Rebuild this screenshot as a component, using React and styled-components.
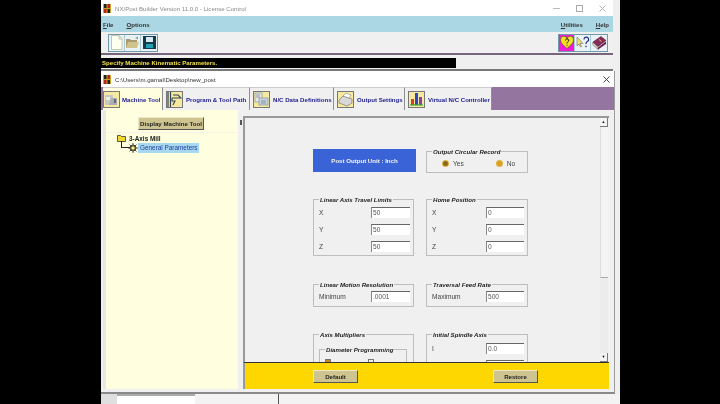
import React from 'react';
import styled, { createGlobalStyle } from 'styled-components';

const Global = createGlobalStyle`
  html, body { margin: 0; padding: 0; background: #000; }
  * { box-sizing: border-box; }
  #root { width: 720px; height: 404px; overflow: hidden; }
`;
const Page = styled.div`
  width: 720px; height: 404px; background: #000; padding-left: 101px; overflow: hidden;
  font-family: "Liberation Sans", Arial, sans-serif; font-size: 6.1px; color: #222;
  filter: blur(0.3px);
`;
const Desktop = styled.div`
  width: 519px; height: 404px; background: #efefef; display: flex; flex-direction: column;
`;
const OuterWindow = styled.section`
  width: 512px; height: 71px; flex: none; display: flex; flex-direction: column; background: #f0f0f0;
`;
const TitleBar = styled.header`
  height: 16px; flex: none; background: #fff; display: flex; align-items: center;
  padding: ${p => p.$inner ? '0 4px 0 2px' : '0 7px 0 2px'}; gap: 4px;
`;
const TitleText = styled.span`
  flex: 1; font-size: 6.1px; color: ${p => p.$inner ? '#333' : '#8a8a8a'};
`;
const WinControls = styled.div`
  display: flex; align-items: center; gap: 16px; color: #9a9a9a;
`;
const MenuBar = styled.nav`
  height: 16px; flex: none; background: #abd7e4; display: flex; align-items: center; padding: 0 4px 0 2px;
`;
const MenuItem = styled.span`
  font-weight: bold; font-size: 6.1px; color: #333; margin-right: ${p => p.$gap || 0}px;
  &::first-letter { text-decoration: underline; }
`;
const MenuSpacer = styled.div` flex: 1; `;
const ToolBar = styled.div`
  height: 21px; flex: none; display: flex; align-items: center; justify-content: space-between;
  padding: 0 5px 0 7px; background: #f0f0f0;
`;
const ToolGroup = styled.div`
  display: flex; height: 18px; border: 1px solid #6f98a8; background: #d4e8ee;
`;
const ToolButton = styled.button`
  width: 16px; height: 16px; padding: 0; border: 0; border-right: 1px solid #a9ccd8;
  background: ${p => p.$bg || '#eaf2f5'}; display: flex; align-items: center; justify-content: center;
  &:last-child { border-right: 0; }
`;
const StatusStrip = styled.div`
  height: 18px; flex: none; border-top: 2px solid #75667e; border-bottom: 2px solid #777; background: #f0f0f0;
  padding-top: 3px;
`;
const StatusBlack = styled.div`
  width: 355px; height: 10px; background: #000; color: #f2e24a; font-weight: bold; font-size: 6.1px;
  line-height: 10px; padding-left: 1px;
`;
const InnerWindow = styled.section`
  width: 514px; height: 323px; flex: none; display: flex; flex-direction: column; background: #f0f0f0;
  border-bottom: 2px solid #8a8a8a; border-right: 1px solid #9a9a9a;
`;
const TabBar = styled.div`
  height: 23px; flex: none; display: flex; padding-left: 2px; background: #9475a0;
`;
const Tab = styled.div`
  width: ${p => p.$w}px; flex: none; display: flex; align-items: center;
  gap: ${p => p.$active ? 2 : 3}px; padding: 1px 0 0 ${p => p.$active ? 0 : 3}px;
  background: ${p => p.$active ? '#ffffe0' : '#f0f0f0'};
  border-right: 1px solid #8f8f8f; border-top: 1px solid #ccc;
  font-weight: bold; font-size: 6.1px; color: #1c1c8e; white-space: nowrap;
`;
const TabIconBox = styled.span`
  width: 17px; height: 17px; flex: none; background: #f6e9a0; border: 1px solid #777;
  display: flex; align-items: center; justify-content: center;
`;
const Body = styled.div`
  flex: 1; min-height: 0; display: flex; background: #f0f0f0; padding: 0 0 3px 2px;
`;
const LeftPane = styled.aside`
  width: 135px; flex: none; background: #ffffe0; border-left: 3px solid #e8e8e0; display: flex; flex-direction: column;
  align-items: stretch; padding-top: 7px;
`;
const DisplayButton = styled.button`
  align-self: center; width: 66px; height: 13px; padding: 0; margin-left: -2px; background: #cdc48f; border: 0;
  border-right: 1px solid #555; border-bottom: 1px solid #555; border-top: 1px solid #eee8c8; border-left: 1px solid #eee8c8;
  font: bold 6.1px "Liberation Sans", Arial, sans-serif; color: #222; white-space: nowrap;
`;
const Tree = styled.div`
  margin-top: 2px; flex: 1; border-top: 1px solid #f4f4ea; padding: 0 0 0 11px; position: relative;
`;
const TreeRow = styled.div`
  display: flex; align-items: center; gap: ${p => p.$gap || 0}px; height: 10px; margin-left: ${p => p.$indent || 0}px;
  font-size: 6.4px; font-weight: ${p => p.$bold ? 'bold' : 'normal'};
`;
const TreeSelected = styled.span`
  background: #a8d8f0; color: #1c3f9c; padding: 0 1px 0 2px; line-height: 10px;
`;
const TreeLink = styled.span`
  position: absolute; left: 15px; top: 8px; width: 9px; height: 7px;
  border-left: 1px solid #222; border-bottom: 1px solid #222;
`;
const Splitter = styled.div`
  width: 5px; flex: none; padding: 10px 0 0 2px; background: #f0f0f0;
`;
const SplitGrip = styled.div` width: 2px; height: 5px; background: #555; `;
const RightCol = styled.div`
  width: 366px; flex: none; display: flex; flex-direction: column; padding-top: 6px;
`;
const Panel = styled.div`
  flex: 1; min-height: 0; display: flex; border-top: 2px solid #999; border-left: 2px solid #999; background: #f0f0f0; overflow: hidden;
`;
const ScrollArea = styled.div`
  flex: 1; min-width: 0; padding: 33px 0 0 68px; overflow: hidden;
`;
const Row = styled.div`
  display: grid; grid-template-columns: 101px 102px; column-gap: 12px; margin-top: ${p => p.$gap || 0}px;
`;
const BlueBox = styled.div`
  width: 103px; height: 23px; margin-top: -2px; background: #3a63d8; color: #f4f4f4; font-weight: bold; font-size: 6.1px;
  display: flex; align-items: center; justify-content: center;
`;
const Group = styled.div`
  position: relative; height: ${p => p.$h}px; border: 1px solid #bdbdbd; padding: ${p => p.$pad || '7px 3px 0 5px'};
  background: #f0f0f0;
`;
const Legend = styled.span`
  position: absolute; left: ${p => p.$left || 5}px; top: -5px; padding: 0 1px; background: #f0f0f0; line-height: 9px;
  font-style: italic; font-weight: bold; font-size: 6.1px; color: #222; white-space: nowrap;
`;
const RadioRow = styled.div`
  display: flex; align-items: center; height: 14px; padding-left: 16px; color: #444; font-size: 6.6px;
`;
const Radio = styled.span`
  width: 5px; height: 5px; border-radius: 50%; background: ${p => p.$on ? '#8a6a20' : '#dca020'};
  box-shadow: 0 0 0 1px #e0b040; margin-right: 5px;
`;
const RadioLabel = styled.span` margin-right: ${p => p.$gap || 0}px; `;
const Field = styled.div`
  display: flex; align-items: center; justify-content: space-between; height: 11px; margin-bottom: 6px;
  color: #444; font-size: 6.6px;
`;
const Input = styled.div`
  width: ${p => p.$w || 39}px; height: 11px; background: #fff; border-top: 1px solid #666; border-left: 1px solid #888;
  font-size: 6.6px; color: #555; line-height: 10px; padding-left: 1px;
`;
const Nested = styled.div`
  position: relative; height: 40px; border: 1px solid #bdbdbd; margin: 14px 0 0 0; width: 88px; padding: 9px 0 0 5px;
`;
const CheckRow = styled.div` display: flex; align-items: center; gap: 37px; `;
const Check = styled.span`
  width: 6px; height: 5px; background: ${p => p.$on ? '#c88a20' : '#eee'}; border: 1px solid #777;
`;
const ScrollBar = styled.div`
  width: 8px; flex: none; display: flex; flex-direction: column; align-items: stretch; margin-right: 1px;
`;
const ArrowButton = styled.div`
  height: 9px; flex: none; background: #f4f4f4; border-right: 1px solid #777; border-bottom: 1px solid #777;
  display: flex; align-items: center; justify-content: center; font-size: 4px; line-height: 1; color: #111;
`;
const Thumb = styled.div`
  flex: none; height: 151px; background: #f4f4f4; border-bottom: 1px solid #aaa; border-left: 1px solid #ddd;
`;
const Track = styled.div` flex: 1; background: #ececec; `;
const YellowBar = styled.footer`
  height: 27px; flex: none; background: #ffd700; border-top: 1px solid #333; border-left: 2px solid #999;
  display: flex; align-items: center; padding: 0 0 0 68px; gap: 135px;
`;
const ActionButton = styled.button`
  width: 45px; height: 13px; padding: 0; background: #cdc48f; border-top: 1px solid #eee8c8; border-left: 1px solid #eee8c8;
  border-right: 1px solid #555; border-bottom: 1px solid #555; font: bold 6.1px "Liberation Sans", Arial, sans-serif; color: #222;
`;
const Behind = styled.div`
  flex: 1; min-height: 0; display: flex; background: #f3f3f3; overflow: hidden;
`;
const BehindSide = styled.div` width: 16px; flex: none; background: #dfdfdf; `;
const BehindTab = styled.div`
  width: 78px; flex: none; background: #fff; border-top: 2px solid #aaa; font-size: 6.1px; line-height: 9px; padding: 5px 0 0 25px; color: #222;
`;
const BehindRule = styled.div` width: 1px; flex: none; background: #555; margin-left: 83px; `;

const Logo = () => (
  <svg width="8" height="9" viewBox="0 0 8 9"><rect width="8" height="9" fill="#c9a227" /><rect x="1" y="0" width="2.5" height="4" fill="#222" /><rect x="4.5" y="0" width="2.5" height="4" fill="#b22" /><rect x="1" y="5" width="2.5" height="4" fill="#b22" /><rect x="4.5" y="5" width="2.5" height="4" fill="#222" /></svg>
);
const XMark = ({ c = '#333' }) => (
  <svg width="7" height="7" viewBox="0 0 7 7"><path d="M.5.5l6 6M6.5.5l-6 6" stroke={c} strokeWidth=".9" /></svg>
);
const NewDoc = () => <svg width="13" height="15" viewBox="0 0 13 15"><path d="M1.5.5H9L12 4v10.5H1.500z" fill="#fffff0" stroke="#c4c4b4" /><path d="M9 .5V4h3" fill="none" stroke="#c4c4b4" /></svg>;
const OpenDoc = () => <svg width="15" height="13" viewBox="0 0 15 13"><path d="M1 3h4l1 1h6v8H1z" fill="#a89c70" /><path d="M3 6h11l-2 6H1z" fill="#cfc48e" /><path d="M10 2l3-1.500v3z" fill="#7a8" /></svg>;
const SaveDisk = () => <svg width="13" height="13" viewBox="0 0 13 13"><rect width="13" height="13" fill="#123a4a" /><rect x="3" y="1" width="7" height="5" fill="#d8e8ec" /><rect x="3" y="8" width="7" height="4" fill="#20a0b0" /></svg>;
const HeartHelp = () => <svg width="14" height="13" viewBox="0 0 14 13"><path d="M7 12.500C3 9 .5 7 .5 4A3.200 3.200 0 0 1 7 3a3.200 3.200 0 0 1 6.500 1C13.500 7 11 9 7 12.500z" fill="#f4e020" stroke="#443" strokeWidth=".6" /><path d="M5.500 4.500a1.600 1.600 0 1 1 2.300 1.400C7 6.300 7 7 7 7.500M7 8.800v1" fill="none" stroke="#222" strokeWidth="1" /></svg>;
const ArrowHelp = () => <svg width="14" height="13" viewBox="0 0 14 13"><path d="M1 1v9l2-2 1.500 3 1-.5L4 7.500h3z" fill="#f4e070" stroke="#555" strokeWidth=".5" /><path d="M8 3.500a2.300 2.300 0 1 1 3.300 2C10.200 6 10 7 10 8M10 9.800v1.500" fill="none" stroke="#1c2a7a" strokeWidth="1.200" /></svg>;
const Book = () => <svg width="15" height="14" viewBox="0 0 15 14"><path d="M1 6l8-5.500 5 4-8 6z" fill="#8a2a5a" stroke="#311" strokeWidth=".5" /><path d="M1 6l5 5.500v2L1 8.500z" fill="#f4f0e0" stroke="#311" strokeWidth=".5" /><path d="M6 11.500l8-6V8l-8 5.500z" fill="#6a1a4a" /><path d="M7 3.500l2.500 2" stroke="#f0c060" strokeWidth="1" /></svg>;

const MachineIcon = () => <svg width="15" height="14" viewBox="0 0 15 14"><rect x="1" y="2" width="8" height="10" fill="#c8c8c0" /><path d="M7 5h6v7H5z" fill="#a8aeb4" /><rect x="2" y="4" width="4" height="3" fill="#eee" /><rect x="10" y="6" width="2" height="4" fill="#667" /></svg>;
const PathIcon = () => <svg width="15" height="15" viewBox="0 0 15 15"><path d="M1 0v15M3.500 0v15" stroke="#345" strokeWidth="1.200" /><path d="M5 6h9l-3-3H6M5 6v3h3l-2 4" fill="none" stroke="#345" strokeWidth="1.100" /></svg>;
const DataIcon = () => <svg width="15" height="15" viewBox="0 0 15 15"><rect x="1" y="1" width="7" height="9" fill="#e8e8e8" stroke="#789" strokeWidth=".6" /><rect x="5" y="6" width="9" height="7" fill="#c8d4e0" stroke="#789" strokeWidth=".6" /><path d="M2 3h4M2 5h4M7 9h5M7 11h5" stroke="#567" strokeWidth=".6" /></svg>;
const PrinterIcon = () => <svg width="15" height="15" viewBox="0 0 15 15"><path d="M1 8l4-4 9 3v4l-5 3-8-3z" fill="#d8d8d8" stroke="#666" strokeWidth=".6" /><path d="M5 4l3-3 5 2-2 3z" fill="#fff" stroke="#777" strokeWidth=".5" /></svg>;
const BarsIcon = () => <svg width="15" height="15" viewBox="0 0 15 15"><rect x="2" y="7" width="3" height="6" fill="#d8402a" /><rect x="6" y="1" width="3" height="12" fill="#2a48c8" /><rect x="10" y="5" width="3" height="8" fill="#8a40a8" /><path d="M1 13h13" stroke="#3a3" strokeWidth="1.200" /></svg>;
const Folder = () => <svg width="9" height="8" viewBox="0 0 9 8"><path d="M.5 1.500h3l1 1h4v5h-8z" fill="#f0d830" stroke="#333" strokeWidth=".8" /></svg>;
const Gear = () => <svg width="10" height="10" viewBox="0 0 10 10"><circle cx="5" cy="5" r="3" fill="#e8d040" stroke="#333" strokeWidth=".9" /><path d="M5 0v10M0 5h10M1.500 1.500l7 7M8.500 1.500l-7 7" stroke="#333" strokeWidth=".8" /><circle cx="5" cy="5" r="1.300" fill="#f8f0a0" /></svg>;

const tabs = [
  { label: 'Machine Tool', w: 60, icon: <MachineIcon />, active: true },
  { label: 'Program & Tool Path', w: 87, icon: <PathIcon /> },
  { label: 'N/C Data Definitions', w: 84, icon: <DataIcon /> },
  { label: 'Output Settings', w: 71, icon: <PrinterIcon /> },
  { label: 'Virtual N/C Controller', w: 87, icon: <BarsIcon /> },
];

const XYZ = ({ values, w }) => ['X', 'Y', 'Z'].map((axis, i) => (
  <Field key={axis}><span>{axis}</span><Input $w={w}>{values[i]}</Input></Field>
));

export default function App() {
  return (
    <Page>
      <Global />
      <Desktop>
        <OuterWindow>
          <TitleBar>
            <Logo />
            <TitleText>NX/Post Builder Version 11.0.0 - License Control</TitleText>
            <WinControls>
              <svg width="7" height="7" viewBox="0 0 7 7"><path d="M0 3.500h7" stroke="#bbb" /></svg>
              <svg width="7" height="7" viewBox="0 0 7 7"><rect x=".5" y=".5" width="6" height="6" fill="none" stroke="#aaa" /></svg>
              <XMark c="#aaa" />
            </WinControls>
          </TitleBar>
          <MenuBar>
            <MenuItem $gap={13}>File</MenuItem>
            <MenuItem>Options</MenuItem>
            <MenuSpacer />
            <MenuItem $gap={13}>Utilities</MenuItem>
            <MenuItem>Help</MenuItem>
          </MenuBar>
          <ToolBar>
            <ToolGroup>
              <ToolButton><NewDoc /></ToolButton>
              <ToolButton><OpenDoc /></ToolButton>
              <ToolButton><SaveDisk /></ToolButton>
            </ToolGroup>
            <ToolGroup>
              <ToolButton $bg="#f01cd8"><HeartHelp /></ToolButton>
              <ToolButton><ArrowHelp /></ToolButton>
              <ToolButton><Book /></ToolButton>
            </ToolGroup>
          </ToolBar>
          <StatusStrip>
            <StatusBlack>Specify Machine Kinematic Parameters.</StatusBlack>
          </StatusStrip>
        </OuterWindow>
        <InnerWindow>
          <TitleBar $inner>
            <Logo />
            <TitleText $inner>C:\Users\m.gamal\Desktop\new_post</TitleText>
            <XMark />
          </TitleBar>
          <TabBar>
            {tabs.map(t => (
              <Tab key={t.label} $w={t.w} $active={t.active}>
                <TabIconBox>{t.icon}</TabIconBox>
                <span>{t.label}</span>
              </Tab>
            ))}
          </TabBar>
          <Body>
            <LeftPane>
              <DisplayButton>Display Machine Tool</DisplayButton>
              <Tree>
                <TreeLink />
                <TreeRow $bold $gap={3}><Folder /><span>3-Axis Mill</span></TreeRow>
                <TreeRow $indent={11}><Gear /><TreeSelected>General Parameters</TreeSelected></TreeRow>
              </Tree>
            </LeftPane>
            <Splitter><SplitGrip /></Splitter>
            <RightCol>
              <Panel>
                <ScrollArea>
                  <Row>
                    <BlueBox>Post Output Unit : Inch</BlueBox>
                    <Group $h={22} $pad="4px 0 0 0">
                      <Legend>Output Circular Record</Legend>
                      <RadioRow>
                        <Radio $on /><RadioLabel $gap={33}>Yes</RadioLabel>
                        <Radio /><RadioLabel>No</RadioLabel>
                      </RadioRow>
                    </Group>
                  </Row>
                  <Row $gap={26}>
                    <Group $h={57}>
                      <Legend>Linear Axis Travel Limits</Legend>
                      <XYZ values={['50', '50', '50']} />
                    </Group>
                    <Group $h={57}>
                      <Legend>Home Position</Legend>
                      <XYZ values={['0', '0', '0']} w={38} />
                    </Group>
                  </Row>
                  <Row $gap={28}>
                    <Group $h={23} $pad="6px 3px 0 5px">
                      <Legend>Linear Motion Resolution</Legend>
                      <Field><span>Minimum</span><Input>.0001</Input></Field>
                    </Group>
                    <Group $h={23} $pad="6px 3px 0 5px">
                      <Legend>Traversal Feed Rate</Legend>
                      <Field><span>Maximum</span><Input $w={38}>500</Input></Field>
                    </Group>
                  </Row>
                  <Row $gap={27}>
                    <Group $h={70} $pad="0 0 0 5px">
                      <Legend>Axis Multipliers</Legend>
                      <Nested>
                        <Legend>Diameter Programming</Legend>
                        <CheckRow><Check $on /><Check /></CheckRow>
                      </Nested>
                    </Group>
                    <Group $h={70} $pad="8px 3px 0 5px">
                      <Legend>Initial Spindle Axis</Legend>
                      <Field><span>I</span><Input $w={38}>0.0</Input></Field>
                      <Field><span /><Input $w={38} /></Field>
                    </Group>
                  </Row>
                </ScrollArea>
                <ScrollBar>
                  <ArrowButton>▲</ArrowButton>
                  <Thumb />
                  <Track />
                  <ArrowButton>▼</ArrowButton>
                </ScrollBar>
              </Panel>
              <YellowBar>
                <ActionButton>Default</ActionButton>
                <ActionButton>Restore</ActionButton>
              </YellowBar>
            </RightCol>
          </Body>
        </InnerWindow>
        <Behind>
          <BehindSide />
          <BehindTab>Alarm</BehindTab>
          <BehindRule />
        </Behind>
      </Desktop>
    </Page>
  );
}
